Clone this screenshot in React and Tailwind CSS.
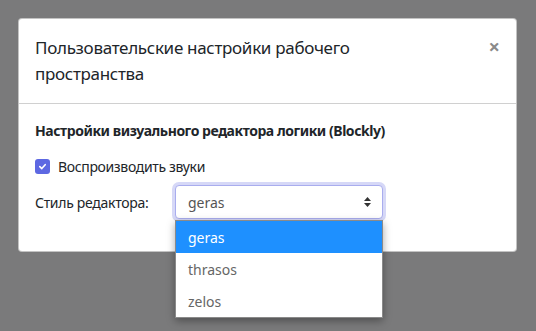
export default function App() {
  const font = { fontFamily: '"Noto Sans", "Open Sans", sans-serif' };
  return (
    <div className="w-[536px] h-[331px] bg-[#7a7a7b] overflow-hidden pt-[18px] pl-[18px]" style={font}>
      <div className="w-[499px] bg-white rounded-[4px] border border-[#6a6a6a]/40">
        <div className="flex items-start justify-between pt-4 pb-4 pl-4 pr-4 border-b border-[#d0d0d0]">
          <div className="text-[17px] leading-[26px] tracking-[-0.3px] text-[#212529] w-[340px]">
            Пользовательские настройки рабочего пространства
          </div>
          <div className="text-[20px] leading-[20px] font-bold text-[#8a8a8a] mt-[2px] mr-[0px]">×</div>
        </div>
        <div className="pt-4 px-4 pb-8">
          <div className="text-[14px] leading-[21px] font-bold tracking-[-0.45px] text-[#212529]">
            Настройки визуального редактора логики (Blockly)
          </div>
          <div className="flex items-center mt-[15px] h-[21px]">
            <div className="w-[15px] h-[15px] rounded-[3px] bg-[#5d68e2] flex items-center justify-center">
              <svg width="9" height="9" viewBox="0 0 10 10">
                <path d="M2 5.2 L4.2 7.3 L8 3" stroke="white" strokeWidth="1.8" fill="none" strokeLinecap="round" strokeLinejoin="round" />
              </svg>
            </div>
            <span className="ml-2 text-[14px] tracking-[-0.35px] text-[#212529]">Воспроизводить звуки</span>
          </div>
          <div className="flex items-center mt-2">
            <div className="w-[140px] text-[14px] tracking-[-0.3px] text-[#212529]">Стиль редактора:</div>
            <div className="relative">
              <div className="w-[208px] h-[34px] border border-[#a9adee] rounded-[4px] ring-[3px] ring-[#d6d8f7] bg-white flex items-center justify-between pl-3 pr-[10px]">
                <span className="text-[14px] text-[#555]">geras</span>
                <svg width="9" height="12" viewBox="0 0 9 12">
                  <path d="M4.5 1 L8 5 L1 5 Z" fill="#333" />
                  <path d="M4.5 11 L8 7 L1 7 Z" fill="#333" />
                </svg>
              </div>
              <div className="absolute left-0 top-[35px] w-[208px] bg-white border border-[#8a8a8a] shadow-[0_3px_8px_rgba(0,0,0,0.35)] z-10">
                <div className="h-[32px] bg-[#1e90ff] text-white text-[14px] flex items-center pl-3">geras</div>
                <div className="h-[32px] text-[#666] text-[14px] flex items-center pl-3">thrasos</div>
                <div className="h-[32px] text-[#666] text-[14px] flex items-center pl-3">zelos</div>
              </div>
            </div>
          </div>
        </div>
      </div>
    </div>
  );
}
